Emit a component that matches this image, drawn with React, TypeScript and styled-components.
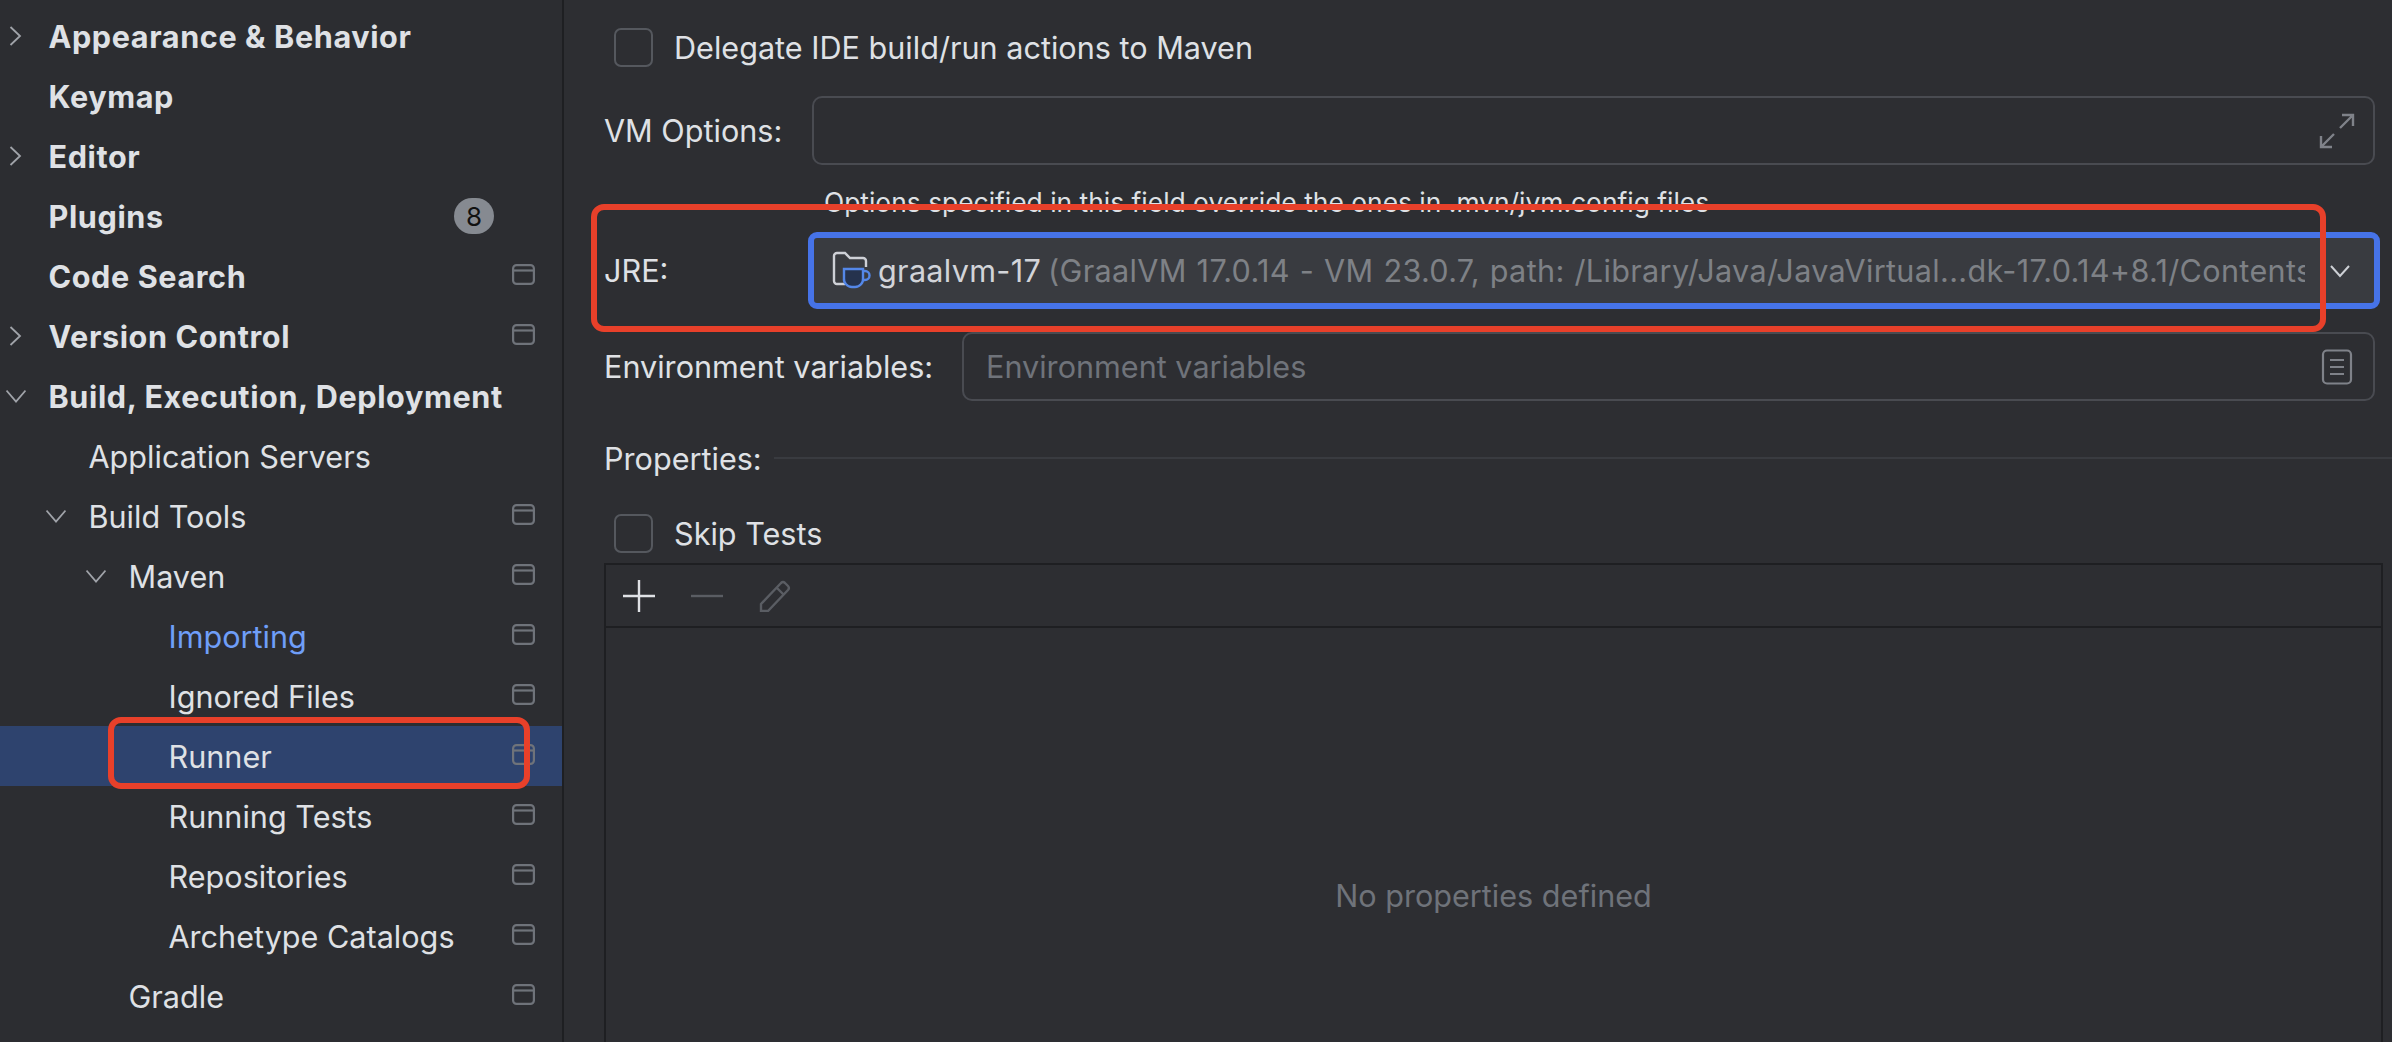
import React from 'react';
import styled, { createGlobalStyle } from 'styled-components';

const GlobalStyle = createGlobalStyle`
    html, body {
        margin: 0;
        padding: 0;
        height: 100%;
        overflow: hidden;
        background: #2d2e32;
    }
    #root {
        height: 100%;
    }
`;

const Page = styled.div`
    display: flex;
    width: 2392px;
    height: 1042px;
    overflow: hidden;
    background: #2d2e32;
    color: #dfe1e5;
    font-family: Inter, "Liberation Sans", sans-serif;
    font-size: 30.6px;
`;

const Sidebar = styled.nav`
    width: 562px;
    flex: none;
    padding-top: 6px;
    background: #2c2d31;
    border-right: 2px solid #1e1f22;
`;

const Row = styled.div<{ $level: number; $selected?: boolean }>`
    position: relative;
    display: flex;
    align-items: center;
    height: 60px;
    padding-left: ${props => 48.5 + props.$level * 40}px;
    background: ${props => (props.$selected ? '#2e436e' : 'transparent')};
`;

const RowArrow = styled.svg<{ $level: number }>`
    position: absolute;
    left: ${props => 6 + props.$level * 40}px;
    top: 20px;
    width: 20px;
    height: 20px;
    color: #a0a3a9;
`;

const RowLabel = styled.span<{ $bold?: boolean; $link?: boolean }>`
    flex: 1;
    font-weight: ${props => (props.$bold ? 700 : 400)};
    letter-spacing: ${props => (props.$bold ? '0.6px' : '0')};
    color: ${props => (props.$link ? '#6f9ef8' : '#dfe1e5')};
    white-space: nowrap;
`;

const Badge = styled.span`
    width: 40px;
    height: 36px;
    margin-right: 68px;
    border-radius: 18px;
    background: #868a91;
    color: #111;
    font-size: 26px;
    line-height: 38px;
    text-align: center;
`;

const ProjectIcon = styled.svg`
    width: 23px;
    height: 21px;
    margin: -4px 27px 0 0;
    color: #6f737a;
`;

const RunnerMark = styled.div`
    position: absolute;
    left: 108px;
    top: -9px;
    width: 422px;
    height: 72px;
    box-sizing: border-box;
    border: 6px solid #e8402a;
    border-radius: 13px;
`;

const Main = styled.main`
    flex: 1;
    min-width: 0;
    padding: 28px 9px 0 40px;
`;

const CheckRow = styled.label<{ $top?: number }>`
    display: flex;
    align-items: center;
    gap: 21px;
    height: 39px;
    margin-top: ${props => props.$top ?? 0}px;
    padding-left: 10px;
`;

const CheckBox = styled.span`
    width: 39px;
    height: 39px;
    box-sizing: border-box;
    border: 2.5px solid #55585e;
    border-radius: 7px;
`;

const FieldRow = styled.div<{ $top: number }>`
    position: relative;
    display: flex;
    align-items: center;
    margin-top: ${props => props.$top}px;
`;

const FieldLabel = styled.span<{ $width: number }>`
    width: ${props => props.$width}px;
    flex: none;
    white-space: nowrap;
`;

const TextField = styled.div`
    flex: 1;
    height: 69px;
    margin-right: 8px;
    box-sizing: border-box;
    display: flex;
    align-items: center;
    justify-content: space-between;
    padding: 0 18px 0 22px;
    border: 2px solid #494b51;
    border-radius: 10px;
    color: #6f737a;
`;

const FieldIcon = styled.svg`
    width: 36px;
    height: 36px;
    color: #7f8289;
`;

const Hint = styled.div`
    margin: 19px 0 0 220px;
    height: 36px;
    line-height: 36px;
    font-size: 26.4px;
    white-space: nowrap;
`;

const Combo = styled.div`
    flex: 1;
    height: 77px;
    margin-left: -4px;
    margin-right: 3px;
    box-sizing: border-box;
    display: flex;
    align-items: center;
    padding: 0 24px 0 18px;
    background: #393b40;
    border: 6px solid #4673e8;
    border-radius: 9px;
    min-width: 0;
`;

const ComboText = styled.div`
    flex: 1;
    min-width: 0;
    overflow: hidden;
    white-space: nowrap;
    margin-left: 7px;
    color: #d2d4d9;
    letter-spacing: 0.3px;
`;

const Muted = styled.span`
    margin-left: 7px;
    color: #7e8186;
    letter-spacing: 0.33px;
    word-spacing: 1px;
`;

const SdkIcon = styled.svg`
    width: 39px;
    height: 39px;
    flex: none;
`;

const ComboArrow = styled.svg`
    width: 20px;
    height: 20px;
    flex: none;
    margin-left: 25px;
    color: #cdd0d5;
`;

const JreMark = styled.div`
    position: absolute;
    left: -13px;
    top: -28px;
    width: 1735px;
    height: 128px;
    box-sizing: border-box;
    border: 6px solid #e8402a;
    border-radius: 13px;
    pointer-events: none;
`;

const SectionTitle = styled.div`
    display: flex;
    align-items: center;
    gap: 12px;
    margin-top: 39px;
    height: 36px;
`;

const SectionLine = styled.div`
    flex: 1;
    height: 2px;
    margin-right: -9px;
    background: #393b40;
`;

const Table = styled.section`
    margin: 10px 0 0 0;
    height: 520px;
    box-sizing: border-box;
    border: 2px solid #1e1f22;
    border-bottom: none;
`;

const TableBar = styled.div`
    display: flex;
    align-items: center;
    gap: 36px;
    height: 61px;
    padding-left: 17px;
    border-bottom: 2px solid #1e1f22;
`;

const BarIcon = styled.svg`
    width: 32px;
    height: 32px;
`;

const EmptyText = styled.div`
    margin-top: 249px;
    text-align: center;
    color: #6f737a;
`;

const navItems = [
    { label: 'Appearance & Behavior', level: 0, bold: true, arrow: 'right' },
    { label: 'Keymap', level: 0, bold: true },
    { label: 'Editor', level: 0, bold: true, arrow: 'right' },
    { label: 'Plugins', level: 0, bold: true, badge: '8' },
    { label: 'Code Search', level: 0, bold: true, icon: true },
    { label: 'Version Control', level: 0, bold: true, arrow: 'right', icon: true },
    { label: 'Build, Execution, Deployment', level: 0, bold: true, arrow: 'down' },
    { label: 'Application Servers', level: 1 },
    { label: 'Build Tools', level: 1, arrow: 'down', icon: true },
    { label: 'Maven', level: 2, arrow: 'down', icon: true },
    { label: 'Importing', level: 3, link: true, icon: true },
    { label: 'Ignored Files', level: 3, icon: true },
    { label: 'Runner', level: 3, icon: true, selected: true },
    { label: 'Running Tests', level: 3, icon: true },
    { label: 'Repositories', level: 3, icon: true },
    { label: 'Archetype Catalogs', level: 3, icon: true },
    { label: 'Gradle', level: 2, icon: true },
];

const App = () => (
    <Page>
        <GlobalStyle />
        <Sidebar>
            {navItems.map(item => (
                <Row key={item.label} $level={item.level} $selected={item.selected}>
                    {item.arrow && (
                        <RowArrow $level={item.level} viewBox="0 0 20 20" fill="none" stroke="currentColor" strokeWidth="1.8">
                            {item.arrow === 'right' ? <path d="M4.5 1l9.5 9-9.5 9" /> : <path d="M0.5 4.5L10 15.5l9.5-11" />}
                        </RowArrow>
                    )}
                    <RowLabel $bold={item.bold} $link={item.link}>{item.label}</RowLabel>
                    {item.badge && <Badge>{item.badge}</Badge>}
                    {item.icon && (
                        <ProjectIcon viewBox="0 0 23 21" fill="none" stroke="currentColor" strokeWidth="2.2">
                            <rect x="1.1" y="1.1" width="20.8" height="18.8" rx="3.5" />
                            <path d="M1.1 6.5h20.8" />
                        </ProjectIcon>
                    )}
                    {item.selected && <RunnerMark />}
                </Row>
            ))}
        </Sidebar>
        <Main>
            <CheckRow>
                <CheckBox />
                Delegate IDE build/run actions to Maven
            </CheckRow>
            <FieldRow $top={29}>
                <FieldLabel $width={208}>VM Options:</FieldLabel>
                <TextField>
                    <span />
                    <FieldIcon viewBox="0 0 36 36" fill="none" stroke="currentColor" strokeWidth="2.4">
                        <path d="M21 15L34 2M23 2h11v11M15 21L2 34M2 23v11h11" />
                    </FieldIcon>
                </TextField>
            </FieldRow>
            <Hint>Options specified in this field override the ones in .mvn/jvm.config files</Hint>
            <FieldRow $top={12}>
                <FieldLabel $width={208}>JRE:</FieldLabel>
                <Combo>
                    <SdkIcon viewBox="0 0 39 39" fill="none">
                        <path d="M13 33H5a3 3 0 0 1-3-3V5a3 3 0 0 1 3-3h8l5 5h13a3 3 0 0 1 3 3v6" stroke="#ced0d6" strokeWidth="2.4" />
                        <path d="M12 18h19v9a8 8 0 0 1-8 9h-3a8 8 0 0 1-8-9z" fill="#25324d" stroke="#5487e8" strokeWidth="2.4" />
                        <path d="M31 20h2a4 4 0 0 1 0 9h-2" stroke="#5487e8" strokeWidth="2.4" />
                    </SdkIcon>
                    <ComboText>
                        graalvm-17
                        <Muted>(GraalVM 17.0.14 - VM 23.0.7, path: /Library/Java/JavaVirtual...dk-17.0.14+8.1/Contents/Home)</Muted>
                    </ComboText>
                    <ComboArrow viewBox="0 0 20 20" fill="none" stroke="currentColor" strokeWidth="2">
                        <path d="M1 5l9 10L19 5" />
                    </ComboArrow>
                </Combo>
                <JreMark />
            </FieldRow>
            <FieldRow $top={23}>
                <FieldLabel $width={358}>Environment variables:</FieldLabel>
                <TextField>
                    Environment variables
                    <FieldIcon viewBox="0 0 36 36" fill="none" stroke="currentColor" strokeWidth="2.2">
                        <rect x="4" y="1.5" width="28" height="33" rx="4" />
                        <path d="M11 11h14M11 18h14M11 25h14" />
                    </FieldIcon>
                </TextField>
            </FieldRow>
            <SectionTitle>
                Properties:
                <SectionLine />
            </SectionTitle>
            <CheckRow $top={38}>
                <CheckBox />
                Skip Tests
            </CheckRow>
            <Table>
                <TableBar>
                    <BarIcon viewBox="0 0 32 32" fill="none" stroke="#dfe1e5" strokeWidth="2.4">
                        <path d="M16 0v32M0 16h32" />
                    </BarIcon>
                    <BarIcon viewBox="0 0 32 32" fill="none" stroke="#5a5d63" strokeWidth="2.4">
                        <path d="M0 16h32" />
                    </BarIcon>
                    <BarIcon viewBox="0 0 32 32" fill="none" stroke="#5a5d63" strokeWidth="2.4">
                        <path d="M2 24L22 3a3 3 0 0 1 4 0l3 3a3 3 0 0 1 0 4L9 31H2zM18 8l7 7" />
                    </BarIcon>
                </TableBar>
                <EmptyText>No properties defined</EmptyText>
            </Table>
        </Main>
    </Page>
);

export default App;
